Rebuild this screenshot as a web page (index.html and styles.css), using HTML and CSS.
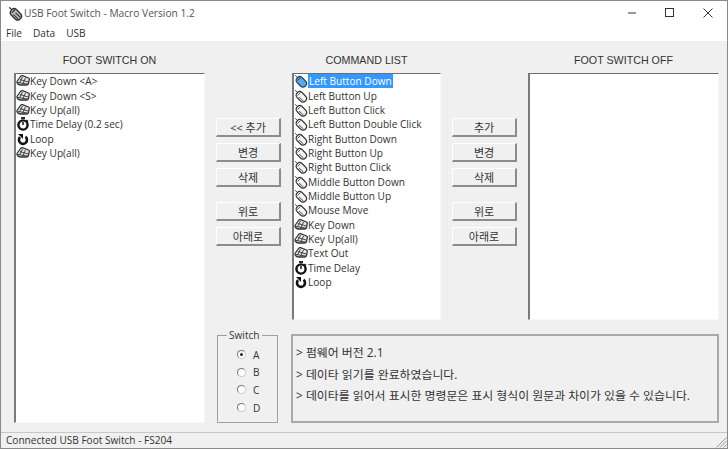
FILE: index.html
```html
<!DOCTYPE html>
<html lang="ko">
<head>
    <meta charset="UTF-8">
    <title>USB Foot Switch - Macro Version 1.2</title>
    <link rel="stylesheet" href="styles.css">
</head>
<body>
    <svg class="defs" width="0" height="0">
        <symbol id="i-mouse" viewBox="0 0 14 14">
            <path d="M1 1.500c1 0 1.500 1 2.500 2" fill="none" stroke="#333" stroke-width="1"/>
            <path d="M3.500 3.500c1.500-1.500 3-1.500 4.500 0l3.500 3.500c1.500 1.500 1.500 3.500 0 5s-3.500 1.500-5 0l-3.500-3.500c-1.300-1.500-1-3.500.5-5z" fill="#f4f4f4" stroke="#333" stroke-width="1.100"/>
            <path d="M3.500 6.500l3-3M5 8l4.500 4" fill="none" stroke="#555" stroke-width="1"/>
        </symbol>
        <symbol id="i-mouse-sel" viewBox="0 0 14 14">
            <path d="M1 1.500c1 0 1.500 1 2.500 2" fill="none" stroke="#245" stroke-width="1"/>
            <path d="M3.500 3.500c1.500-1.500 3-1.500 4.500 0l3.500 3.500c1.500 1.500 1.500 3.500 0 5s-3.500 1.500-5 0l-3.500-3.500c-1.300-1.500-1-3.500.5-5z" fill="#5aa6e6" stroke="#245" stroke-width="1.100"/>
            <path d="M3.500 6.500l3-3" fill="none" stroke="#245" stroke-width="1"/>
        </symbol>
        <symbol id="i-key" viewBox="0 0 14 14">
            <path d="M1 7.500l3.500-5c.5-.7 1.200-1 2-.8l6 2.300c1 .5 1 1 .7 1.800l-.7 3.700c-.3 1-1 1.500-2 1.500h-5.500c-1.500 0-3.500-1-4-2.500z" fill="#e6e6e6" stroke="#333" stroke-width="1.300"/>
            <path d="M2 8.500l9.500 1.500M4 5.500l8 2.500M6.500 3l-3 6M9.500 4l-3 6.500" fill="none" stroke="#333" stroke-width=".9"/>
        </symbol>
        <symbol id="i-timer" viewBox="0 0 14 14">
            <path d="M5 1h4" stroke="#111" stroke-width="1.800" fill="none"/>
            <circle cx="7" cy="8" r="4.600" fill="#fff" stroke="#111" stroke-width="2.400"/>
            <path d="M7 8V5" stroke="#111" stroke-width="1.500" fill="none"/>
            <path d="M10.500 3l1.500 1.500" stroke="#111" stroke-width="1.400" fill="none"/>
        </symbol>
        <symbol id="i-loop" viewBox="0 0 14 14">
            <path d="M9.500 4.800a4 4 0 1 1-5.500.4" fill="none" stroke="#111" stroke-width="2.600"/>
            <path d="M2 2h5v5z" fill="#111"/>
        </symbol>
        <symbol id="i-app" viewBox="0 0 14 14">
            <path d="M1 1.500c1 0 1.500 1 2.500 2" fill="none" stroke="#333" stroke-width="1"/>
            <path d="M3.500 3.500c1.500-1.500 3-1.500 4.500 0l3.500 3.500c1.500 1.500 1.500 3.500 0 5s-3.500 1.500-5 0l-3.500-3.500c-1.300-1.500-1-3.500.5-5z" fill="#bbb" stroke="#333" stroke-width="1.300"/>
            <path d="M3.500 6.500l3-3M5 8l4.500 4M7 6.500l4.500 4" fill="none" stroke="#333" stroke-width="1"/>
        </symbol>
    </svg>

    <div class="window">
        <div class="titlebar">
            <svg class="app-icon" width="15" height="15"><use href="#i-app"/></svg>
            <span class="app-title">USB Foot Switch - Macro Version 1.2</span>
            <div class="win-buttons">
                <svg width="10" height="10" viewBox="0 0 10 10"><path d="M1 5h8" stroke="#333" stroke-width="1"/></svg>
                <svg width="10" height="10" viewBox="0 0 10 10"><rect x=".5" y=".5" width="8" height="8" fill="none" stroke="#333"/></svg>
                <svg width="10" height="10" viewBox="0 0 10 10"><path d="M.5.500l9 9M9.500.500l-9 9" stroke="#333" stroke-width="1"/></svg>
            </div>
        </div>
        <div class="menubar">
            <span>File</span>
            <span>Data</span>
            <span>USB</span>
        </div>

        <div class="main">
            <div class="col-left">
                <div class="col-title">FOOT SWITCH ON</div>
                <ul class="listbox listbox-tall">
                    <li><svg><use href="#i-key"/></svg>Key Down &lt;A&gt;</li>
                    <li><svg><use href="#i-key"/></svg>Key Down &lt;S&gt;</li>
                    <li><svg><use href="#i-key"/></svg>Key Up(all)</li>
                    <li><svg><use href="#i-timer"/></svg>Time Delay (0.2 sec)</li>
                    <li><svg><use href="#i-loop"/></svg>Loop</li>
                    <li><svg><use href="#i-key"/></svg>Key Up(all)</li>
                </ul>
            </div>

            <div class="col-rest">
                <div class="top-row">
                    <div class="btn-col">
                        <button class="btn">&lt;&lt; 추가</button>
                        <button class="btn">변경</button>
                        <button class="btn">삭제</button>
                        <button class="btn btn-gap">위로</button>
                        <button class="btn">아래로</button>
                    </div>
                    <div class="col-center">
                        <div class="col-title">COMMAND LIST</div>
                        <ul class="listbox">
                            <li><svg><use href="#i-mouse-sel"/></svg><span class="selected">Left Button Down</span></li>
                            <li><svg><use href="#i-mouse"/></svg>Left Button Up</li>
                            <li><svg><use href="#i-mouse"/></svg>Left Button Click</li>
                            <li><svg><use href="#i-mouse"/></svg>Left Button Double Click</li>
                            <li><svg><use href="#i-mouse"/></svg>Right Button Down</li>
                            <li><svg><use href="#i-mouse"/></svg>Right Button Up</li>
                            <li><svg><use href="#i-mouse"/></svg>Right Button Click</li>
                            <li><svg><use href="#i-mouse"/></svg>Middle Button Down</li>
                            <li><svg><use href="#i-mouse"/></svg>Middle Button Up</li>
                            <li><svg><use href="#i-mouse"/></svg>Mouse Move</li>
                            <li><svg><use href="#i-key"/></svg>Key Down</li>
                            <li><svg><use href="#i-key"/></svg>Key Up(all)</li>
                            <li><svg><use href="#i-key"/></svg>Text Out</li>
                            <li><svg><use href="#i-timer"/></svg>Time Delay</li>
                            <li><svg><use href="#i-loop"/></svg>Loop</li>
                        </ul>
                    </div>
                    <div class="btn-col">
                        <button class="btn">추가</button>
                        <button class="btn">변경</button>
                        <button class="btn">삭제</button>
                        <button class="btn btn-gap">위로</button>
                        <button class="btn">아래로</button>
                    </div>
                    <div class="col-right">
                        <div class="col-title">FOOT SWITCH OFF</div>
                        <ul class="listbox"></ul>
                    </div>
                </div>

                <div class="bottom-row">
                    <fieldset class="switch-box">
                        <legend>Switch</legend>
                        <div class="radio"><span class="dot dot-on"></span>A</div>
                        <div class="radio"><span class="dot"></span>B</div>
                        <div class="radio"><span class="dot"></span>C</div>
                        <div class="radio"><span class="dot"></span>D</div>
                    </fieldset>
                    <div class="log-box">
                        <p>&gt; 펌웨어 버전 2.1</p>
                        <p>&gt; 데이타 읽기를 완료하였습니다.</p>
                        <p>&gt; 데이타를 읽어서 표시한 명령문은 표시 형식이 원문과 차이가 있을 수 있습니다.</p>
                    </div>
                </div>
            </div>
        </div>

        <div class="statusbar">
            <span>Connected USB Foot Switch - FS204</span>
            <svg class="grip" width="12" height="12" viewBox="0 0 12 12"><path d="M11.500 1.500l-10 10M11.500 5l-6.500 6.500M11.500 8.500l-3 3" stroke="#999" stroke-width="1" fill="none"/></svg>
        </div>
    </div>
</body>
</html>
```

FILE: styles.css
```css
* {
    margin: 0;
    padding: 0;
    box-sizing: border-box;
}

body {
    font-family: "Open Sans", "Noto Sans CJK KR", sans-serif;
    font-size: 10.100px;
    color: #333;
    background: #f0f0f0;
    overflow: hidden;
}

.defs {
    position: absolute;
}

.window {
    width: 728px;
    height: 449px;
    border: 1px solid #8a8a8a;
    display: flex;
    flex-direction: column;
}

.titlebar {
    height: 24px;
    background: white;
    display: flex;
    align-items: center;
    padding-left: 7px;
}

.app-icon {
    margin-right: 1px;
}

.app-title {
    font-size: 10.200px;
    color: #555;
}

.win-buttons {
    margin-left: auto;
    display: flex;
    gap: 28px;
    padding-right: 14px;
    align-items: center;
    height: 100%;
}

.menubar {
    height: 16px;
    background: white;
    display: flex;
    gap: 11px;
    padding-left: 5px;
    align-items: center;
}

.main {
    flex: 1;
    min-height: 0;
    display: flex;
    padding: 12px 8px 9px 13px;
    gap: 11px;
}

.col-left {
    width: 191px;
    display: flex;
    flex-direction: column;
}

.col-title {
    height: 20px;
    text-align: center;
    font-family: "Liberation Sans", sans-serif;
    font-size: 10.700px;
    line-height: 14px;
}

.listbox {
    list-style: none;
    flex: 1;
    background: white;
    border-top: 1px solid #6e6e6e;
    border-left: 2px solid #7a7a7a;
    border-right: 1px solid #f8f8f8;
    border-bottom: 1px solid #f8f8f8;
}

.listbox li {
    height: 14.360px;
    display: flex;
    align-items: center;
    white-space: nowrap;
}

.listbox svg {
    width: 14px;
    height: 14px;
    flex: none;
}

.selected {
    background: #3399ff;
    color: white;
    padding: 0 1px;
}

.col-rest {
    flex: 1;
    display: flex;
    flex-direction: column;
}

.top-row {
    height: 267px;
    display: flex;
}

.btn-col {
    width: 65px;
    flex: none;
    display: flex;
    flex-direction: column;
    gap: 6px;
    padding-top: 65px;
}

.btn {
    height: 19px;
    font-family: "Open Sans", "Noto Sans CJK KR", sans-serif;
    font-size: 11px;
    color: #333;
    background: #f0f0f0;
    border: none;
    border-top: 1px solid #fff;
    border-left: 1px solid #fff;
    border-right: 2px solid #8c8c8c;
    border-bottom: 2px solid #8c8c8c;
}

.btn-gap {
    margin-top: 9px;
}

.col-center {
    width: 149px;
    flex: none;
    margin: 0 11px 0 11px;
    display: flex;
    flex-direction: column;
}

.col-right {
    width: 191px;
    flex: none;
    margin-left: 11px;
    display: flex;
    flex-direction: column;
}

.bottom-row {
    flex: 1;
    display: flex;
    margin-top: 14px;
}

.switch-box {
    width: 61px;
    min-width: 0;
    flex: none;
    margin-left: 1px;
    margin-right: 13px;
    margin-top: -6px;
    border: 1px solid #a0a0a0;
    padding: 4px 0 0 0;
}

.switch-box legend {
    padding: 0 2px;
    margin-left: 9px;
    line-height: 14px;
}

.radio {
    height: 17.600px;
    display: flex;
    align-items: center;
    padding-left: 19px;
}

.dot {
    width: 9px;
    height: 9px;
    border-radius: 50%;
    border: 1px solid #ccc;
    border-top-color: #777;
    border-left-color: #777;
    background: white;
    margin-right: 7px;
    display: flex;
    align-items: center;
    justify-content: center;
}

.dot-on::after {
    content: "";
    width: 3px;
    height: 3px;
    border-radius: 50%;
    background: #222;
}

.log-box {
    flex: 1;
    background: #f0f0f0;
    border: 2px solid #a9a9a9;
    padding: 6px 3px 0;
    font-size: 11.900px;
    line-height: 21.500px;
}

.statusbar {
    height: 16px;
    flex: none;
    border-top: 1px solid #c8c8c8;
    padding-left: 5px;
    line-height: 15px;
    display: flex;
    justify-content: space-between;
    align-items: flex-end;
}

.grip {
    display: block;
    flex: none;
}
```
